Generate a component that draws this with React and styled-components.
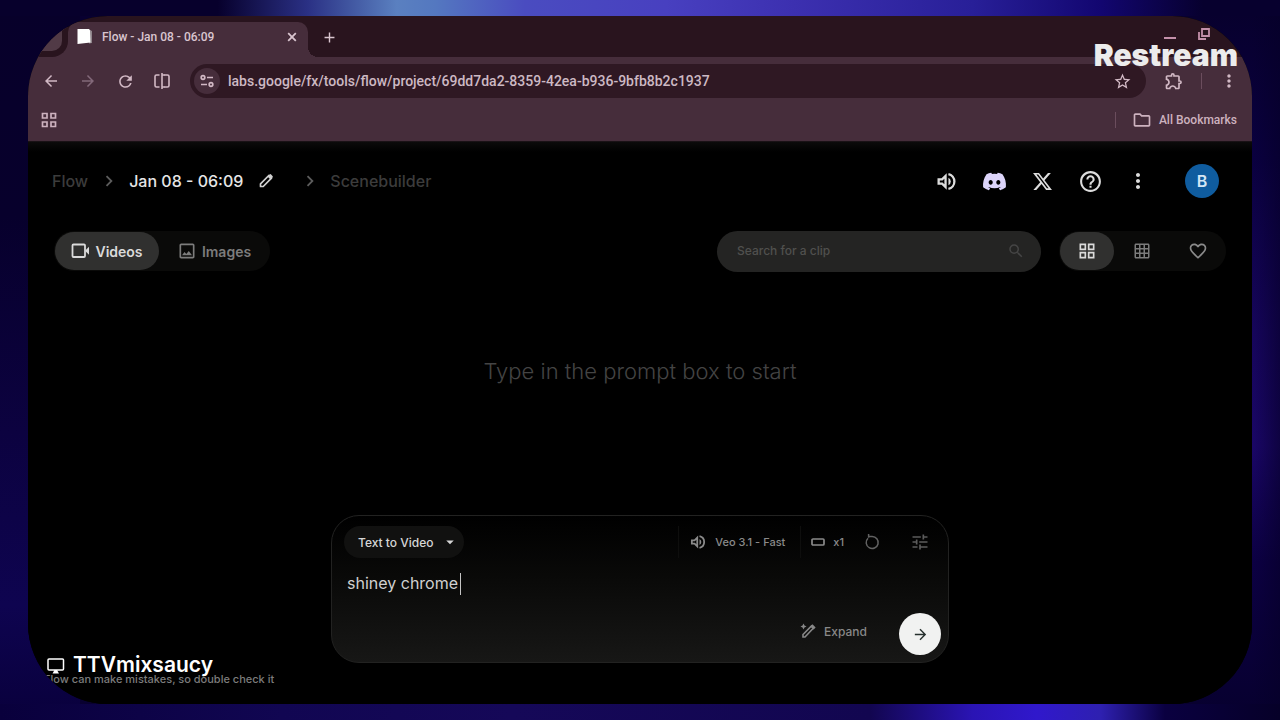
import React from "react";
import styled, { createGlobalStyle, css } from "styled-components";
import {
  MdArrowBack,
  MdArrowForward,
  MdArrowDropDown,
  MdAdd,
  MdChevronRight,
  MdFavoriteBorder,
  MdGridOn,
  MdHelpOutline,
  MdMoreVert,
  MdOutlineExtension,
  MdOutlineFolder,
  MdOutlineGridView,
  MdOutlineImage,
  MdRefresh,
  MdSearch,
  MdStarBorder,
  MdTune,
} from "react-icons/md";
import { FaDiscord } from "react-icons/fa6";

const GlobalStyle = createGlobalStyle`
  *, *::before, *::after { box-sizing: border-box; }
  body { margin: 0; background: #080030; }
  button, input, textarea { font: inherit; color: inherit; }
`;

const Stage = styled.div`
  position: relative;
  display: flex;
  min-height: 100vh;
  padding: 16px 28px;
  font-family: Inter, "Liberation Sans", sans-serif;
  background:
    linear-gradient(90deg, #07002c 0, #07002c 17%, #2a3084 24%, #5a80c0 31%, #5478c0 34%, #4a4cc0 41%, #4840c0 52%, #3c30b0 62%, #281f98 76%, #120670 86%, #07002e 94%) top / 100% 16px no-repeat,
    linear-gradient(90deg, #09003c 0, #110652 22%, #150858 40%, #120650 68%, #2a14b4 76%, #3018cc 81%, #2e20b0 86%, #0a0040 91%, #060028 100%) bottom / 100% 16px no-repeat,
    linear-gradient(90deg, #07002c00, #06002899) right / 28px 100% no-repeat,
    linear-gradient(#07002c 0, #0a0040 22%, #16055c 46%, #1a0668 62%, #0c0044 78%, #07002e 100%) right / 80px 100% no-repeat,
    linear-gradient(#07002a 0, #07002c 30%, #0c0240 60%, #0e0450 84%, #09003c 100%) left / 80px 100% no-repeat,
    #080030;
`;

const Window = styled.div`
  display: flex;
  flex: 1;
  flex-direction: column;
  min-width: 0;
  overflow: hidden;
  border-radius: 80px;
  background: #000;
`;

const TabStrip = styled.div`
  display: flex;
  height: 41px;
  padding-top: 6px;
  background: #29141e;
  color: #d9c5cf;
  font: 500 12px/16px Roboto, sans-serif;
`;

const PreviousTab = styled.div`
  width: 40px;
  background: #462d3b;
  &::before {
    content: "";
    display: block;
    width: 40px;
    height: 35px;
    border: solid #29141e;
    border-width: 0 6px 6px 0;
    border-radius: 0 0 16px 0;
    background: #513a46;
  }
`;

const ActiveTab = styled.div`
  position: relative;
  display: flex;
  align-items: center;
  gap: 9px;
  width: 240px;
  padding: 0 8px 6px 8px;
  border-radius: 10px 10px 0 0;
  background: #462d3b;
  &::after {
    content: "";
    position: absolute;
    right: -10px;
    bottom: 0;
    width: 10px;
    height: 10px;
    background: radial-gradient(circle at 100% 0, #29141e 10px, #462d3b 10px);
  }
`;

const TabTitle = styled.span`
  flex: 1;
  white-space: nowrap;
`;

const IconButton = styled.button`
  display: grid;
  place-items: center;
  flex: none;
  width: ${(p) => p.$w || 24}px;
  height: ${(p) => p.$h || 24}px;
  padding: 0;
  border: 0;
  border-radius: 21px;
  background: ${(p) => p.$bg || "transparent"};
  color: ${(p) => p.$color || "inherit"};
`;

const NewTab = styled.div`
  padding: 3px 0 0 9px;
`;

const WindowControls = styled.div`
  display: flex;
  gap: 10px;
  margin-left: auto;
  padding-right: 36px;
  color: #c490aa;
`;

const Toolbar = styled.div`
  display: flex;
  align-items: center;
  height: 48px;
  padding: 0 11px;
  background: #462d3b;
  color: #d2b9c5;
`;

const NavButtons = styled.div`
  display: flex;
  gap: 13px;
  margin-right: 16px;
`;

const AddressBar = styled.label`
  display: flex;
  flex: 1;
  align-items: center;
  gap: 8px;
  height: 34px;
  padding: 0 12px 0 4px;
  border-radius: 17px;
  background: #2f1823;
`;

const AddressInput = styled.input`
  flex: 1;
  min-width: 0;
  padding: 0;
  border: 0;
  outline: 0;
  background: none;
  color: #cdb9c3;
  font: 500 14px/20px Roboto, sans-serif;
`;

const ToolbarEnd = styled.div`
  display: flex;
  align-items: center;
  gap: 15px;
  padding-left: 16px;
`;

const Divider = styled.span`
  width: 1px;
  height: 16px;
  background: #6b4d5d;
`;

const BookmarkBar = styled.div`
  display: flex;
  align-items: center;
  justify-content: space-between;
  height: 36px;
  padding: 0 15px 6px 9px;
  background: #462d3b;
  color: #cdb2bf;
  font: 500 12px/16px Roboto, sans-serif;
`;

const AllBookmarks = styled.div`
  display: flex;
  align-items: center;
  gap: 16px;
`;

const BookmarkFolder = styled.button`
  display: flex;
  align-items: center;
  gap: 7px;
  padding: 0;
  border: 0;
  background: none;
`;

const Page = styled.main`
  display: flex;
  flex: 1;
  flex-direction: column;
  padding: 0 24px;
  border-top: 1px solid #1a1216;
  background: linear-gradient(#0c0b0b, #000 10px);
`;

const Row = styled.div`
  display: flex;
  align-items: center;
  justify-content: space-between;
  height: ${(p) => p.$h}px;
  padding: 0 ${(p) => p.$pad || 0}px;
`;

const Breadcrumb = styled.nav`
  display: flex;
  align-items: center;
  font-size: 16px;
  line-height: 24px;
`;

const Crumb = styled.a`
  color: ${(p) => (p.$current ? "#e6e6e6" : "#3c3c3c")};
  font-weight: 500;
  text-decoration: none;
  white-space: nowrap;
`;

const CrumbArrow = styled.span`
  display: grid;
  place-items: center;
  width: 41px;
  color: #5c5c5c;
`;

const HeaderActions = styled.div`
  display: flex;
  align-items: center;
  gap: 8px;
  padding-right: 9px;
  color: #dcdcdc;
`;

const Avatar = styled.button`
  width: 34px;
  height: 34px;
  margin-left: 19px;
  padding: 0;
  border: 0;
  border-radius: 50%;
  background: #0f5c9f;
  color: #d4e6f5;
  font-size: 16px;
  font-weight: 600;
`;

const Segmented = styled.div`
  display: flex;
  align-items: center;
  height: 40px;
  padding: 0 1px;
  border-radius: 20px;
  background: #0a0a09;
`;

const MediaTab = styled.button`
  display: flex;
  align-items: center;
  justify-content: center;
  gap: 5px;
  height: 38px;
  width: ${(p) => (p.$on ? 104 : 110)}px;
  padding: 0;
  border: 0;
  border-radius: 19px;
  background: ${(p) => (p.$on ? "#30302f" : "transparent")};
  color: ${(p) => (p.$on ? "#dadada" : "#7c7c7c")};
  font-size: 14px;
  font-weight: 600;
`;

const FilterEnd = styled.div`
  display: flex;
  align-items: center;
  gap: 18px;
`;

const SearchField = styled.label`
  display: flex;
  align-items: center;
  width: 324px;
  height: 41px;
  padding: 0 16px 0 20px;
  border-radius: 21px;
  background: #242423;
  color: #454545;
`;

const SearchInput = styled.input`
  flex: 1;
  min-width: 0;
  padding: 0;
  border: 0;
  outline: 0;
  background: none;
  font-size: 12px;
  font-weight: 500;
  line-height: 16px;
  &::placeholder { color: #50504e; opacity: 1; }
`;

const Empty = styled.p`
  flex: 1;
  margin: 0;
  padding-top: 73px;
  color: #444;
  font-size: 22px;
  font-weight: 300;
  line-height: 32px;
  text-align: center;
`;

const PromptBox = styled.form`
  display: flex;
  flex-direction: column;
  align-self: center;
  width: 618px;
  max-width: 100%;
  height: 148px;
  padding: 10px 7px 7px 12px;
  border: 1px solid #222221;
  border-radius: 28px;
  background: linear-gradient(#000, #0a0a09 45%, #171716);
`;

const PromptTop = styled.div`
  display: flex;
  align-items: center;
  justify-content: space-between;
`;

const ModeButton = styled.button`
  display: flex;
  align-items: center;
  gap: 7px;
  height: 32px;
  padding: 0 5px 0 14px;
  border: 0;
  border-radius: 16px;
  background: #111110;
  color: #d6d6d6;
  font-size: 12px;
  font-weight: 500;
`;

const Settings = styled.div`
  display: flex;
  align-items: center;
  padding-right: 3px;
  color: #8a8a8a;
`;

const SettingButton = styled.button`
  display: flex;
  align-items: center;
  gap: 8px;
  height: 32px;
  padding: 0 10px;
  border: 0;
  background: none;
  font-size: 11px;
  font-weight: 500;
  ${(p) =>
    p.$divided &&
    css`
      padding: 0 15px 0 10px;
      border: solid #0e0e0d;
      border-width: 0 1px;
    `}
`;

const TuneSlot = styled.span`
  display: flex;
  padding-left: 12px;
`;

const PromptInput = styled.textarea`
  flex: 1;
  min-height: 0;
  margin-top: 13px;
  padding: 0 3px;
  border: 0;
  outline: 0;
  resize: none;
  background: none;
  color: #d0d0d0;
  font-size: 16px;
  line-height: 24px;
  overflow: hidden;
`;

const PromptBody = styled.div`
  position: relative;
  display: flex;
  flex: 1;
  min-height: 0;
`;

const Caret = styled.span`
  position: absolute;
  top: 15px;
  left: 116px;
  width: 1px;
  height: 22px;
  background: #c4c4c4;
`;

const PromptBottom = styled.div`
  display: flex;
  justify-content: flex-end;
  gap: 28px;
`;

const ExpandButton = styled.button`
  display: flex;
  align-items: center;
  gap: 8px;
  height: 36px;
  padding: 0 4px;
  border: 0;
  background: none;
  color: #888;
  font-size: 12px;
  font-weight: 500;
`;

const Disclaimer = styled.p`
  margin: 0 0 0 -8px;
  padding: 8px 0 17px;
  color: #7c7c7c;
  font-size: 11px;
  font-weight: 500;
  line-height: 16px;
`;

const Brand = styled.div`
  position: absolute;
  top: 37px;
  right: 42px;
  color: #ececec;
  font-size: 30px;
  font-weight: 900;
  line-height: 36px;
`;

const Streamer = styled.div`
  position: absolute;
  bottom: 43px;
  left: 47px;
  display: flex;
  align-items: center;
  gap: 8px;
  color: #fff;
  font-size: 21px;
  font-weight: 600;
  line-height: 24px;
`;

const SplitIcon = () => (
  <svg width="18" height="18" viewBox="0 0 18 18" fill="none" stroke="currentColor" strokeWidth="1.600">
    <path d="M6.500 3H3.500Q2 3 2 4.500v9Q2 15 3.500 15h3M11.500 3h3Q16 3 16 4.500v9q0 1.500-1.500 1.500h-3M9 1v16" />
    <path d="M9 3h3M9 15h3" />
  </svg>
);

const SiteIcon = () => (
  <svg width="16" height="16" viewBox="0 0 16 16" fill="none" stroke="currentColor" strokeWidth="1.700">
    <circle cx="4" cy="4.500" r="1.800" />
    <path d="M8 4.500h6M2 11.500h6" />
    <circle cx="12" cy="11.500" r="1.800" />
  </svg>
);

const FaviconShape = () => (
  <svg width="17" height="17" viewBox="0 0 17 17" aria-hidden="true">
    <path d="M13 1.500 16 3v12l-3 .5z" fill="#8f858b" />
    <path d="M1.500 1h11.500l1 1.500.5 12L1.500 16z" fill="#fff" />
  </svg>
);

const CloseIcon = () => (
  <svg width="10" height="10" viewBox="0 0 10 10" aria-hidden="true">
    <path d="m1.200 1.200 7.600 7.600M8.800 1.200 1.200 8.800" stroke="currentColor" strokeWidth="1.800" />
  </svg>
);

const MinimizeIcon = () => (
  <svg width="14" height="14" viewBox="0 0 14 14" aria-hidden="true">
    <path d="M1 11h12" stroke="currentColor" strokeWidth="2" />
  </svg>
);

const RestoreIcon = () => (
  <svg width="14" height="14" viewBox="0 0 14 14" fill="none" stroke="currentColor" strokeWidth="1.800">
    <path d="M5 2h7v7H5zM2 5v7h7" />
  </svg>
);

const AppsIcon = () => (
  <svg width="16" height="16" viewBox="0 0 16 16" fill="none" stroke="currentColor" strokeWidth="1.700">
    <path d="M1.500 1.500h4.500v4.500h-4.500zM10 1.500h4.500v4.500H10zM1.500 10h4.500v4.500h-4.500zM10 10h4.500v4.500H10z" />
  </svg>
);

const PencilIcon = () => (
  <svg width="16" height="16" viewBox="0 0 16 16" aria-hidden="true">
    <path d="M2.500 13.500v-2.700L10.800 2.500l2.700 2.700-8.300 8.300z" fill="none" stroke="currentColor" strokeWidth="1.700" strokeLinejoin="round" />
    <path d="m9.500 3.500 2-2q.8-.8 1.600 0l1.400 1.400q.8.800 0 1.600l-2 2z" fill="currentColor" />
  </svg>
);

const SpeakerIcon = ({ size }) => (
  <svg width={size} height={size} viewBox="0 0 24 24" fill="none" stroke="currentColor" strokeWidth="2.400">
    <path d="M3.800 9.800v4.400h3.600l3.600 3.600V6.200L7.400 9.800z" />
    <path d="M14 8a4.500 4.500 0 0 1 0 8z" fill="currentColor" stroke="none" />
    <path d="M14 4.200a8 8 0 0 1 0 15.600" />
  </svg>
);

const XLogo = () => (
  <svg width="19" height="19" viewBox="0 0 24 24" fill="currentColor">
    <path d="M18.901 1.153h3.680l-8.040 9.190L24 22.846h-7.406l-5.800-7.584-6.638 7.584H.474l8.600-9.830L0 1.154h7.594l5.243 6.932ZM17.610 20.644h2.039L6.486 3.240H4.298Z" />
  </svg>
);

const VideoIcon = () => (
  <svg width="19" height="18" viewBox="0 0 19 18" fill="none" stroke="currentColor" strokeWidth="1.800">
    <rect x="1.500" y="2.500" width="12.500" height="12.500" rx="1" />
    <path d="m14 8.800 4-4v8z" fill="currentColor" stroke="none" />
  </svg>
);

const RatioIcon = () => (
  <svg width="14" height="10" viewBox="0 0 14 10" fill="none" stroke="currentColor" strokeWidth="1.700">
    <rect x="1" y="2" width="12" height="6" rx="1" />
  </svg>
);

const CreditIcon = () => (
  <svg width="18" height="18" viewBox="0 0 18 18" fill="none" stroke="currentColor" strokeWidth="1.500">
    <path d="M5 5.200a6 6 0 1 0 4-1.700H5.500M5.600 1v3.800" />
  </svg>
);

const PenSparkIcon = () => (
  <svg width="16" height="16" viewBox="0 0 16 16" fill="none" stroke="currentColor" strokeWidth="1.600">
    <path d="M3 14v-2.500l8.500-8.500 2 2L5 14z" />
    <path d="m11 4 1.500-1.500 2 2L13 6" fill="currentColor" />
    <path d="m3.500.5 1 2 2 1-2 1-1 2-1-2-2-1 2-1z" fill="currentColor" stroke="none" />
  </svg>
);

const ScreenIcon = () => (
  <svg width="18" height="18" viewBox="0 0 18 18" fill="none" stroke="currentColor" strokeWidth="1.500">
    <rect x="1" y="3" width="15.500" height="11" rx="1" />
    <path d="M5.500 17.500 7.500 14h2.500l2 3.500z" fill="currentColor" stroke="none" />
  </svg>
);

export default function App() {
  return (
    <>
      <GlobalStyle />
      <Stage>
        <Window>
          <TabStrip>
            <PreviousTab />
            <ActiveTab>
              <FaviconShape />
              <TabTitle>Flow - Jan 08 - 06:09</TabTitle>
              <IconButton $w={16} aria-label="Close tab"><CloseIcon /></IconButton>
            </ActiveTab>
            <NewTab>
              <IconButton aria-label="New tab"><MdAdd size={17} /></IconButton>
            </NewTab>
            <WindowControls>
              <IconButton aria-label="Minimize"><MinimizeIcon /></IconButton>
              <IconButton aria-label="Restore"><RestoreIcon /></IconButton>
            </WindowControls>
          </TabStrip>
          <Toolbar>
            <NavButtons>
              <IconButton aria-label="Back"><MdArrowBack size={18} /></IconButton>
              <IconButton aria-label="Forward" $color="#83697a"><MdArrowForward size={18} /></IconButton>
              <IconButton aria-label="Reload"><MdRefresh size={19} /></IconButton>
              <IconButton aria-label="Split view"><SplitIcon /></IconButton>
            </NavButtons>
            <AddressBar>
              <IconButton type="button" aria-label="Site information" $w={26} $h={26} $bg="#462d3b"><SiteIcon /></IconButton>
              <AddressInput aria-label="Address" defaultValue="labs.google/fx/tools/flow/project/69dd7da2-8359-42ea-b936-9bfb8b2c1937" />
              <IconButton type="button" aria-label="Bookmark this page"><MdStarBorder size={19} /></IconButton>
            </AddressBar>
            <ToolbarEnd>
              <IconButton aria-label="Extensions"><MdOutlineExtension size={20} /></IconButton>
              <Divider />
              <IconButton aria-label="Browser menu"><MdMoreVert size={20} /></IconButton>
            </ToolbarEnd>
          </Toolbar>
          <BookmarkBar>
            <IconButton aria-label="Apps"><AppsIcon /></IconButton>
            <AllBookmarks>
              <Divider />
              <BookmarkFolder><MdOutlineFolder size={20} />All Bookmarks</BookmarkFolder>
            </AllBookmarks>
          </BookmarkBar>
          <Page>
            <Row $h={78}>
              <Breadcrumb aria-label="Breadcrumb">
                <Crumb href="#">Flow</Crumb>
                <CrumbArrow><MdChevronRight size={22} /></CrumbArrow>
                <Crumb href="#" $current>Jan 08 - 06:09</Crumb>
                <IconButton aria-label="Rename project" $w={46} $color="#d0d0d0"><PencilIcon /></IconButton>
                <CrumbArrow><MdChevronRight size={22} /></CrumbArrow>
                <Crumb href="#">Scenebuilder</Crumb>
              </Breadcrumb>
              <HeaderActions>
                <IconButton $w={40} aria-label="Sound"><SpeakerIcon size={23} /></IconButton>
                <IconButton $w={40} aria-label="Discord" $color="#dcd4fa"><FaDiscord size={25} /></IconButton>
                <IconButton $w={40} aria-label="X"><XLogo /></IconButton>
                <IconButton $w={40} aria-label="Help"><MdHelpOutline size={25} /></IconButton>
                <IconButton $w={40} aria-label="More options"><MdMoreVert size={24} /></IconButton>
                <Avatar aria-label="Account">B</Avatar>
              </HeaderActions>
            </Row>
            <Row $h={62} $pad={2}>
              <Segmented>
                <MediaTab $on><VideoIcon />Videos</MediaTab>
                <MediaTab><MdOutlineImage size={20} />Images</MediaTab>
              </Segmented>
              <FilterEnd>
                <SearchField>
                  <SearchInput aria-label="Search for a clip" placeholder="Search for a clip" />
                  <MdSearch size={18} />
                </SearchField>
                <Segmented>
                  <IconButton $w={54} $h={38} $bg="#30302f" $color="#dadada" aria-label="Large grid"><MdOutlineGridView size={20} /></IconButton>
                  <IconButton $w={56} $h={38} $color="#7c7c7c" aria-label="Small grid"><MdGridOn size={18} /></IconButton>
                  <IconButton $w={55} $h={38} $color="#8a8a8a" aria-label="Favorites"><MdFavoriteBorder size={20} /></IconButton>
                </Segmented>
              </FilterEnd>
            </Row>
            <Empty>Type in the prompt box to start</Empty>
            <PromptBox onSubmit={(e) => e.preventDefault()}>
              <PromptTop>
                <ModeButton type="button">Text to Video<MdArrowDropDown size={18} /></ModeButton>
                <Settings>
                  <SettingButton type="button" $divided><SpeakerIcon size={18} />Veo 3.1 - Fast</SettingButton>
                  <SettingButton type="button"><RatioIcon />x1</SettingButton>
                  <IconButton type="button" $w={36} $color="#626262" aria-label="Credits"><CreditIcon /></IconButton>
                  <TuneSlot>
                    <IconButton type="button" $w={36} $color="#5c5c5c" aria-label="Settings"><MdTune size={20} /></IconButton>
                  </TuneSlot>
                </Settings>
              </PromptTop>
              <PromptBody>
                <PromptInput aria-label="Prompt" defaultValue="shiney chrome " />
                <Caret />
              </PromptBody>
              <PromptBottom>
                <ExpandButton type="button"><PenSparkIcon />Expand</ExpandButton>
                <IconButton $w={42} $h={42} $bg="#f1f2f1" $color="#26302e" aria-label="Generate"><MdArrowForward size={17} /></IconButton>
              </PromptBottom>
            </PromptBox>
            <Disclaimer>Flow can make mistakes, so double check it</Disclaimer>
          </Page>
        </Window>
        <Brand>Restream</Brand>
        <Streamer><ScreenIcon />TTVmixsaucy</Streamer>
      </Stage>
    </>
  );
}
